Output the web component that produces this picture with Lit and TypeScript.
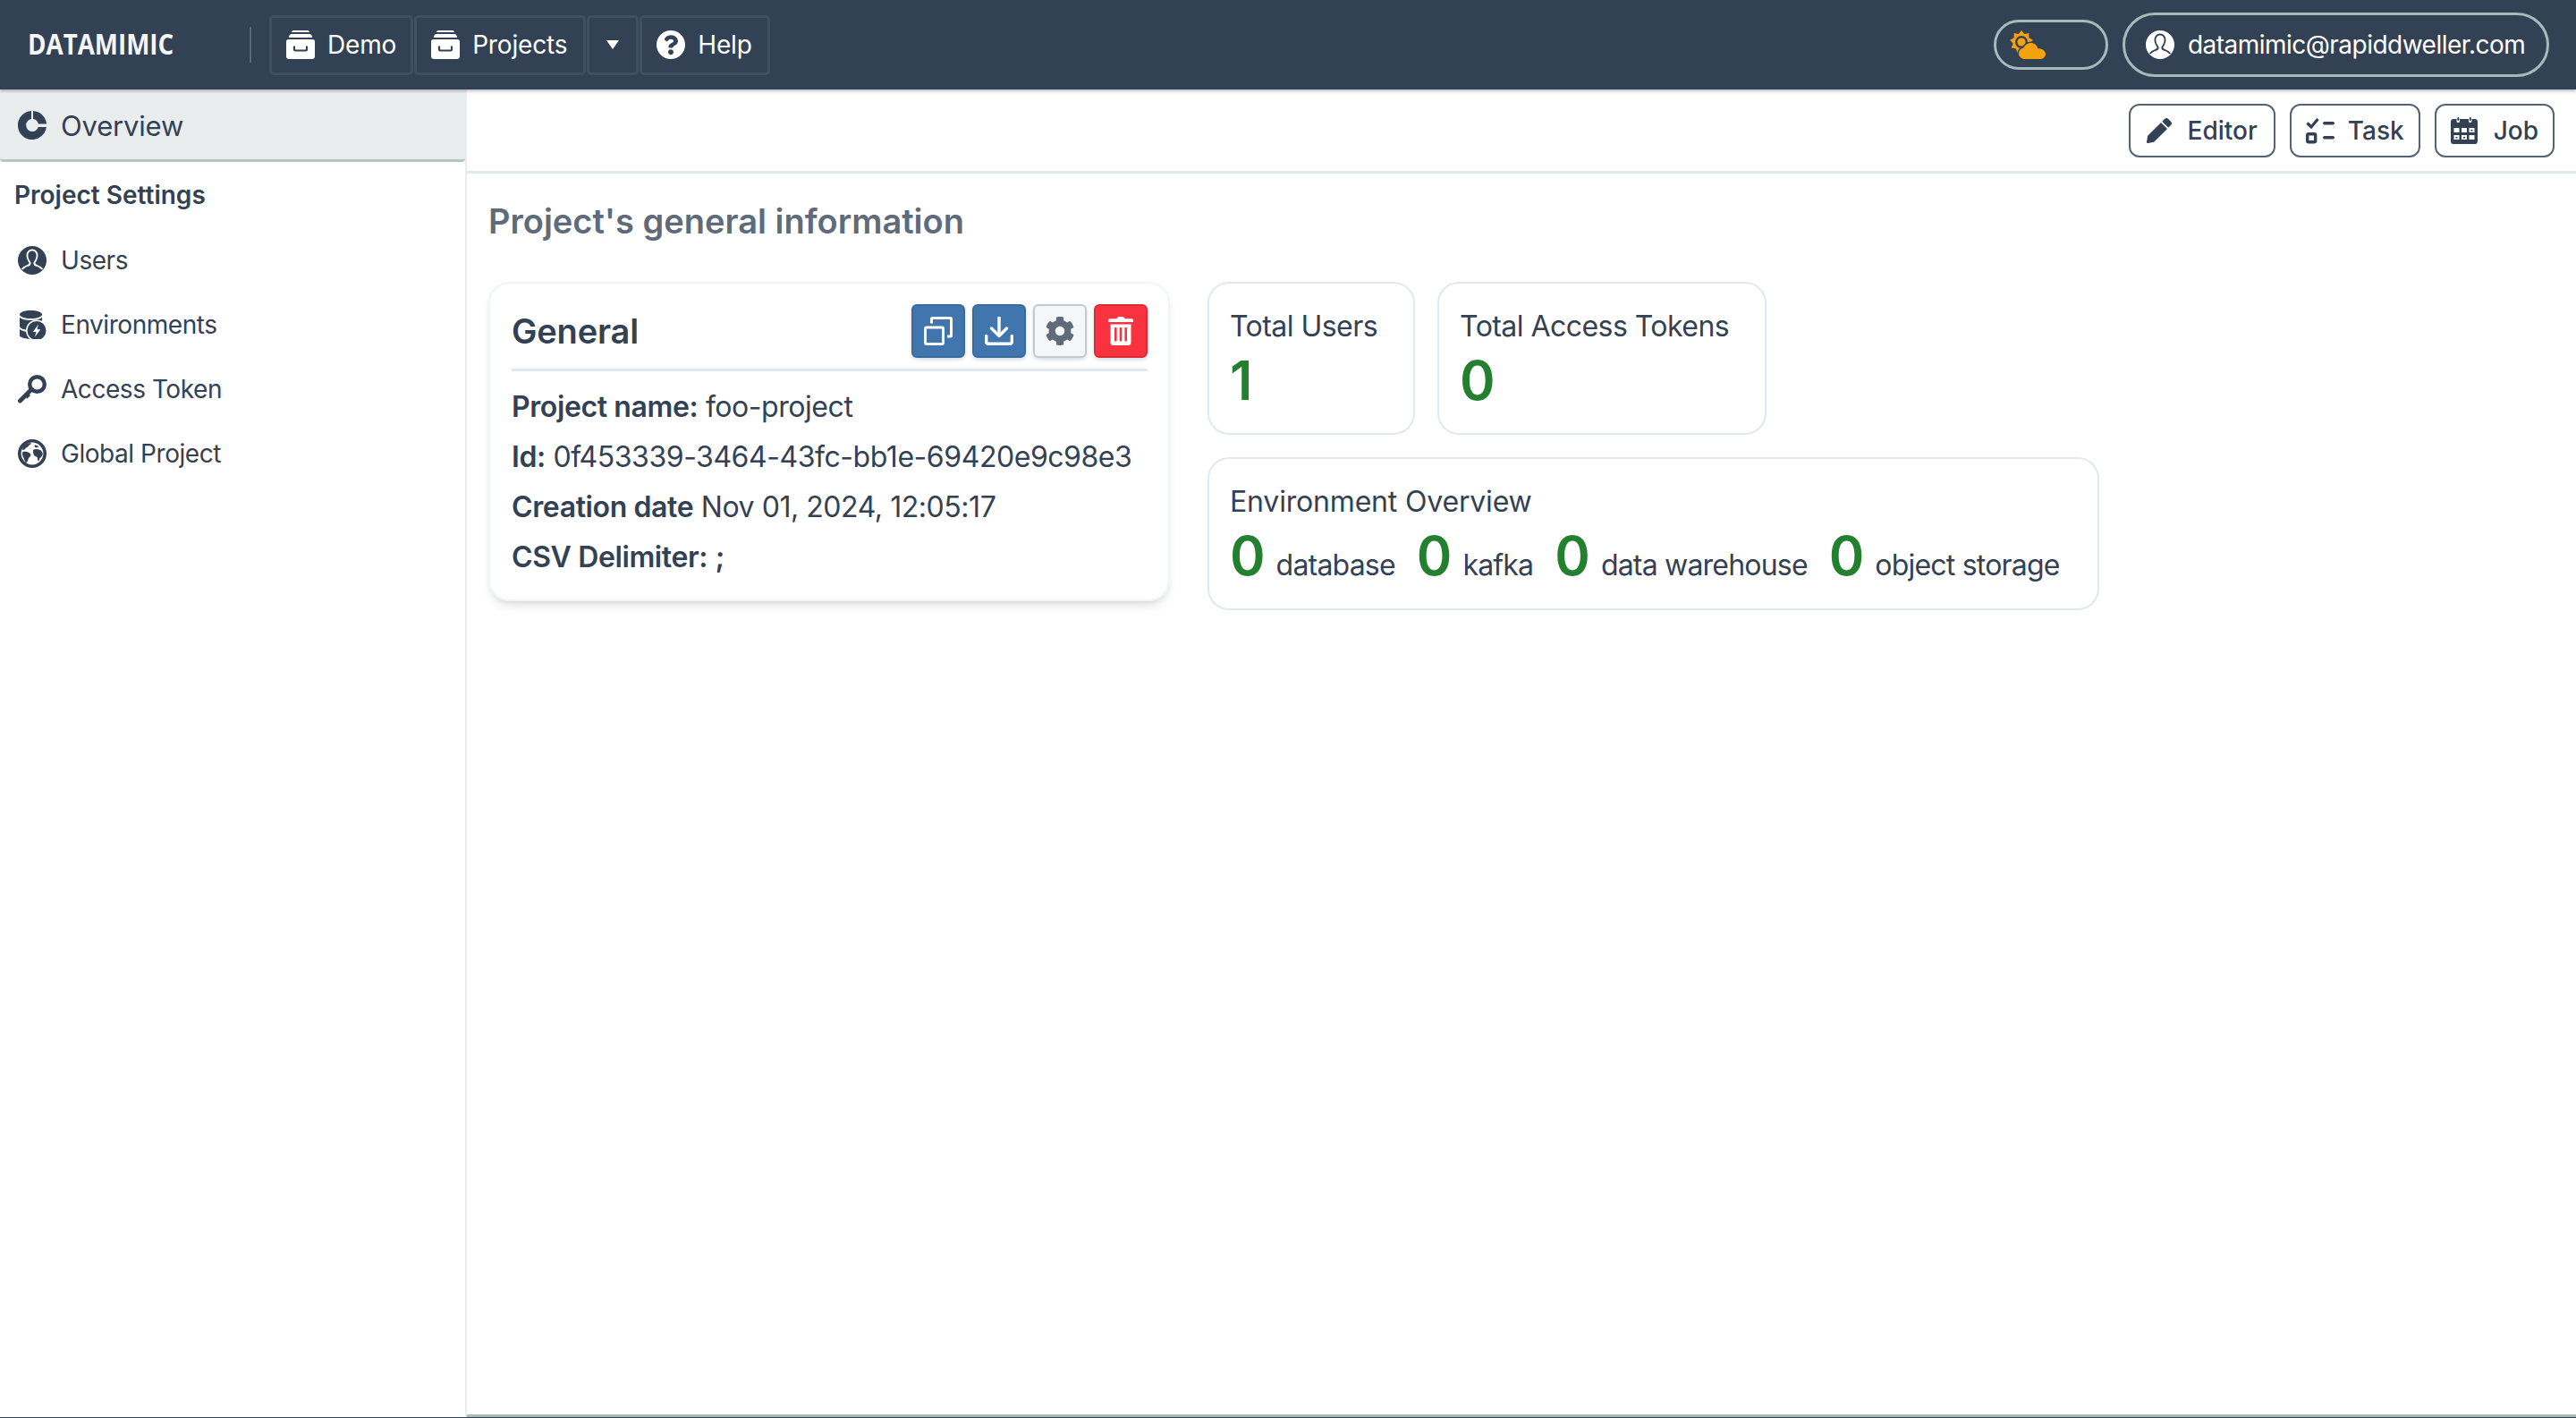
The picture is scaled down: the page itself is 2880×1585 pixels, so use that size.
import { LitElement, html, css, svg } from "lit";
import { customElement } from "lit/decorators.js";

const star = (() => {
  const pts: string[] = [];
  const n = 9;
  for (let i = 0; i < n * 2; i++) {
    const r = i % 2 ? 9.6 : 13;
    const a = (Math.PI * i) / n - Math.PI / 2;
    pts.push(`${(13 + r * Math.cos(a)).toFixed(2)},${(13 + r * Math.sin(a)).toFixed(2)}`);
  }
  return pts.join(" ");
})();

const personPath =
  "M4.6 26c1.6-2.2 4.1-3.3 6.4-4.1 1.9-.7 2.6-1.4 2.6-2.8 0-1-.9-1.9-1.7-3.4-.8-1.5-1.4-3-1.4-5 0-3.6 2.4-6.1 5.5-6.1s5.5 2.5 5.5 6.1c0 2-.6 3.5-1.4 5-.8 1.5-1.7 2.4-1.7 3.4 0 1.4.7 2.1 2.6 2.8 2.3.8 4.8 1.9 6.4 4.1";
const bustPath =
  "M16 5.600c-2.800 0-4.600 2.200-4.600 5.100 0 1.900.6 3.400 1.300 4.700.8 1.500 1.900 2.500 1.900 3.800 0 1.800-1 2.800-3.200 3.600-2 .8-4.100 1.600-5.400 3.200A14.600 14.600 0 0 0 16 30.200c4.100 0 7.700-1.600 10-4.200-1.300-1.600-3.400-2.400-5.400-3.200-2.200-.8-3.200-1.800-3.200-3.600 0-1.300 1.100-2.300 1.900-3.800.7-1.300 1.300-2.800 1.300-4.700 0-2.900-1.800-5.100-4.600-5.100z";

const icons = {
  archive: svg`<svg class="ic" viewBox="0 0 32 32"><path d="M6 2c0-1 1-2 2-2h16c1 0 2 1 2 2z" fill="currentColor"/><path d="M3 8c0-2 1-4 3-4h20c2 0 3 2 3 4z" fill="currentColor"/><path d="M0 12.500c0-1.400 1-2.500 2.500-2.500h27c1.500 0 2.500 1.100 2.500 2.500V29c0 1.700-1.300 3-3 3H3c-1.700 0-3-1.300-3-3z" fill="currentColor"/><path d="M9 17.500v3.700c0 .7.500 1.300 1.200 1.300h11.600c.7 0 1.200-.6 1.200-1.300v-3.700" fill="none" stroke="#334155" stroke-width="2.200"/></svg>`,
  help: svg`<svg class="ic" viewBox="8 8 496 496"><path fill="currentColor" d="M504 256c0 136.997-111.043 248-248 248S8 392.997 8 256C8 119.083 119.043 8 256 8s248 111.083 248 248zM262.655 90c-54.497 0-89.255 22.957-116.549 63.758-3.536 5.286-2.353 12.415 2.715 16.258l34.699 26.31c5.205 3.947 12.621 3.008 16.665-2.122 17.864-22.658 30.113-35.797 57.303-35.797 20.429 0 45.698 13.148 45.698 32.958 0 14.976-12.363 22.667-32.534 33.976C247.128 238.528 216 254.941 216 296v4c0 6.627 5.373 12 12 12h56c6.627 0 12-5.373 12-12v-1.333c0-28.462 83.186-29.647 83.186-106.667 0-58.002-60.165-102-116.531-102zM256 338c-25.365 0-46 20.635-46 46 0 25.364 20.635 46 46 46s46-20.636 46-46c0-25.365-20.635-46-46-46z"/></svg>`,
  weather: svg`<svg class="ic weather" viewBox="0 0 40 32"><polygon points="${star}" fill="#f2a20c"/><circle cx="13" cy="13" r="7" fill="#334155"/><circle cx="13" cy="13" r="4.600" fill="#f2a20c"/><path d="M17 32c-4 0-7-2.800-7-6.300 0-3.200 2.300-5.800 5.500-6.200C17 16.300 20 14 23.500 14c3.900 0 7.100 2.700 7.800 6.300 4.300-.3 8.700 2.400 8.700 6.300 0 3-2.500 5.400-5.500 5.400z" fill="#334155" stroke="#334155" stroke-width="3"/><path d="M17 32c-4 0-7-2.800-7-6.300 0-3.200 2.300-5.800 5.500-6.200C17 16.300 20 14 23.500 14c3.900 0 7.100 2.700 7.800 6.300 4.300-.3 8.700 2.400 8.700 6.300 0 3-2.500 5.400-5.500 5.400z" fill="#f2a20c"/></svg>`,
  userLight: svg`<svg class="ic" viewBox="0 0 32 32"><circle cx="16" cy="16" r="16" fill="#fff"/><path d="${personPath}" fill="#334155" stroke="#334155" stroke-width="2"/><path d="${bustPath}" fill="#fff"/></svg>`,
  user: svg`<svg class="ic" viewBox="0 0 32 32"><circle cx="16" cy="16" r="16" fill="#334155"/><path d="${personPath}" fill="#fff" stroke="#fff" stroke-width="2"/><path d="${bustPath}" fill="#334155"/></svg>`,
  overview: svg`<svg class="ic" viewBox="0 0 32 32"><path d="M15 .1v9A7 7 0 1 0 22.800 18h9A16 16 0 1 1 15 .1z" fill="#334155"/><path d="M17 .1A16 16 0 0 1 32 14.500h-9.200A7 7 0 0 0 17 9.100z" fill="#334155"/></svg>`,
  env: svg`<svg class="ic" viewBox="0 0 32 32"><path d="M2 4.500C2 2 7.500 0 14.500 0S27 2 27 4.500 21.500 9 14.500 9 2 7 2 4.500z" fill="#334155"/><path d="M2 8c2.500 2 7 3 12.500 3S24.500 10 27 8v3.500c-7 1-11 5-12 10.500C8 22 2 20.500 2 17.500z" fill="#334155"/><path d="M2 21c2.500 2 6.500 3 12 3.200.5 2.800 1.600 5.300 3.400 7.300-1 .2-2 .3-2.900.3C7.500 31.800 2 30 2 28z" fill="#334155"/><circle cx="21" cy="22.500" r="12" fill="#fff"/><circle cx="21" cy="22.500" r="10.500" fill="#334155"/><path d="M23 15.500l-6.200 8.500h3.700l-1.500 5.500 6.300-8.300h-3.800z" fill="#fff"/></svg>`,
  key: svg`<svg class="ic" viewBox="0 0 32 32"><circle cx="21.500" cy="10.500" r="8.300" fill="none" stroke="#334155" stroke-width="4.400"/><path d="M15.500 16 2.500 29" stroke="#334155" stroke-width="4.800" stroke-linecap="round" fill="none"/><path d="M7.500 23.500l3 3 3.500-3.500-3-3z" fill="#334155"/></svg>`,
  globe: svg`<svg class="ic" viewBox="0 0 32 32"><circle cx="16" cy="16" r="14.200" fill="#fff" stroke="#334155" stroke-width="3.600"/><path d="M8 6c2-1.500 5-2 7-1.500-.5 1.500-3 2-3.500 3.500-1 1.500-3 1-3.500 3-1 1-2 1-3 .5C5 9.500 6 7.500 8 6zM5.500 14c2.500-.5 5 0 7 1 1.500 1 2.500 2.500 1.500 4-1 1-2 1.500-2.500 3.500-.5 2-1.500 3.500-2.500 4-2-3-2-5-3.500-7.500C4.800 17 4.800 15.500 5.500 14zM19 6.500c1.500 0 3 .5 4.500 1.500-1 1-2.500 1.500-4 1-1-.5-1.500-1.500-.5-2.500zM17 12c2-1.500 5-1 8 0 1.500 1 2.500 2.500 2.800 4.500-.5 2-1.800 4-3.300 4.500-.5 1.500-.5 3-1.500 3.500-1-1-1-3-1.300-4.500-1.500-.5-3.500-1-4-3-.7-2-.7-3.500-.7-5z" fill="#334155"/></svg>`,
  pencil: svg`<svg class="ic pencil" viewBox="0 0 512 512"><path fill="currentColor" d="M497.900 142.100l-46.100 46.100c-4.700 4.700-12.300 4.700-17 0l-111-111c-4.700-4.700-4.700-12.300 0-17l46.100-46.100c18.700-18.700 49.100-18.700 67.900 0l60.100 60.100c18.800 18.700 18.800 49.100 0 67.900zM284.200 99.800L21.600 362.400.4 483.900c-2.900 16.400 11.400 30.600 27.800 27.800l121.500-21.300 262.600-262.600c4.700-4.700 4.700-12.300 0-17l-111-111c-4.800-4.700-12.400-4.700-17.100 0z"/></svg>`,
  task: svg`<svg class="ic" viewBox="0 0 32 32"><path d="M1.500 7.500l4.500 4.500 7.500-9" fill="none" stroke="currentColor" stroke-width="3.200"/><rect x="1.700" y="19.700" width="9" height="9" rx="1.500" fill="none" stroke="currentColor" stroke-width="3.400"/><rect x="19" y="6" width="13" height="3.600" rx="1.800" fill="currentColor"/><rect x="19" y="22" width="13" height="3.600" rx="1.800" fill="currentColor"/></svg>`,
  calendar: svg`<svg class="ic cal" viewBox="0 0 30 30"><path d="M3 2h3.500v2.500a1.700 1.700 0 0 0 3.500 0V2h10v2.500a1.700 1.700 0 0 0 3.500 0V2H27c1.700 0 3 1.300 3 3v22c0 1.700-1.300 3-3 3H3c-1.700 0-3-1.300-3-3V5c0-1.700 1.300-3 3-3z" fill="currentColor"/><rect x="7.300" y="0" width="2" height="4" rx="1" fill="currentColor"/><rect x="20.800" y="0" width="2" height="4" rx="1" fill="currentColor"/><g fill="#fff"><rect x="3.500" y="12" width="6" height="5"/><rect x="12" y="12" width="6" height="5"/><rect x="20.500" y="12" width="6" height="5"/><rect x="3.500" y="20" width="6" height="5"/><rect x="12" y="20" width="6" height="5"/><rect x="20.500" y="20" width="6" height="5"/></g><g fill="currentColor"><rect x="22.500" y="14" width="2" height="1.500"/><rect x="5.500" y="22" width="2" height="1.500"/><rect x="14" y="22" width="2" height="1.500"/></g></svg>`,
  clone: svg`<svg class="ic" viewBox="0 0 32 32"><rect x="1.500" y="12" width="20" height="18.500" rx="1.500" fill="none" stroke="#fff" stroke-width="3"/><path d="M8.500 7.500V2.500a1 1 0 0 1 1-1h20a1 1 0 0 1 1 1V21a1 1 0 0 1-1 1H26" fill="none" stroke="#fff" stroke-width="3"/></svg>`,
  download: svg`<svg class="ic" viewBox="0 0 32 32"><path d="M16 .5V20" stroke="#fff" stroke-width="3.400" stroke-linecap="round" fill="none"/><path d="M7.500 13 16 21.500 24.500 13" stroke="#fff" stroke-width="3.400" stroke-linecap="round" stroke-linejoin="round" fill="none"/><path d="M1.700 21.500v7a1.800 1.800 0 0 0 1.800 1.800h25a1.800 1.800 0 0 0 1.800-1.800v-7" stroke="#fff" stroke-width="3.400" stroke-linecap="round" fill="none"/></svg>`,
  gear: svg`<svg class="ic gear" viewBox="14 8 484 496"><path fill="#5f6b7a" d="M487.400 315.700l-42.600-24.600c4.300-23.200 4.300-47 0-70.200l42.600-24.600c4.900-2.800 7.100-8.600 5.500-14-11.100-35.600-30-67.800-54.700-94.600-3.800-4.100-10-5.100-14.800-2.300L380.800 110c-17.900-15.400-38.500-27.300-60.800-35.100V25.800c0-5.600-3.900-10.500-9.400-11.700-36.700-8.200-74.300-7.800-109.200 0-5.500 1.200-9.400 6.100-9.400 11.700V75c-22.200 7.900-42.800 19.800-60.800 35.100L88.700 85.500c-4.900-2.800-11-1.900-14.800 2.300-24.700 26.700-43.600 58.900-54.700 94.600-1.700 5.400.6 11.200 5.500 14L67.300 221c-4.300 23.200-4.300 47 0 70.200l-42.600 24.600c-4.900 2.800-7.100 8.600-5.500 14 11.100 35.600 30 67.800 54.700 94.600 3.800 4.100 10 5.100 14.800 2.300l42.600-24.600c17.900 15.400 38.500 27.300 60.800 35.100v49.200c0 5.600 3.900 10.500 9.400 11.700 36.700 8.200 74.300 7.800 109.200 0 5.500-1.200 9.400-6.100 9.400-11.700v-49.200c22.200-7.900 42.800-19.800 60.800-35.100l42.600 24.600c4.900 2.800 11 1.900 14.800-2.300 24.700-26.700 43.600-58.900 54.700-94.600 1.500-5.500-.7-11.300-5.600-14.100zM256 336c-44.100 0-80-35.900-80-80s35.900-80 80-80 80 35.900 80 80-35.900 80-80 80z"/></svg>`,
  trash: svg`<svg class="ic trash" viewBox="0 0 28 32"><path d="M9.500 2.200C9.800 1 10.800 0 12 0h4c1.200 0 2.200 1 2.500 2.200H26c1.100 0 2 .8 2 1.800v2H0V4c0-1 .9-1.800 2-1.800z" fill="#fff"/><path d="M2.500 8.500h23V29c0 1.700-1.300 3-3 3h-17c-1.700 0-3-1.300-3-3z" fill="#fff"/><g fill="#f9323f"><rect x="7" y="12" width="2.600" height="15.500" rx="1"/><rect x="12.700" y="12" width="2.600" height="15.500" rx="1"/><rect x="18.400" y="12" width="2.600" height="15.500" rx="1"/></g></svg>`,
};

@customElement("app-root")
export class AppRoot extends LitElement {
  static styles = css`
    :host {
      display: flex;
      flex-direction: column;
      height: 100vh;
      box-sizing: border-box;
      border-bottom: 1px solid #334155;
      font-family: Inter, "Liberation Sans", sans-serif;
      letter-spacing: -0.011em;
      color: #334155;
      background: #fff;
    }
    * { box-sizing: border-box; }
    .ic { width: 32px; height: 32px; display: block; flex: none; }
    .weather { width: 40px; }
    .pencil { width: 28px; height: 28px; }
    .cal { width: 30px; height: 30px; }
    .gear { width: 32px; height: 32px; }
    .trash { width: 28px; height: 32px; }

    .top {
      flex: none;
      height: 100px;
      background: #334155;
      color: #fff;
      display: flex;
      align-items: center;
      padding: 0 30px 0 31px;
      position: relative;
      z-index: 2;
      box-shadow: 0 2px 3px rgba(51, 65, 85, 0.35);
    }
    .logo {
      font-family: "Open Sans", sans-serif;
      font-weight: 700;
      font-size: 33px;
      letter-spacing: 0;
      width: 248px;
      padding-bottom: 3px;
      white-space: nowrap;
      transform: scaleX(0.84);
      transform-origin: left center;
      color: #f4f6f8;
    }
    .sep { width: 2px; height: 40px; background: #5b6778; margin-right: 20px; }
    .nav { display: flex; gap: 1px; }
    .nb {
      height: 67px;
      border: 3px solid #424f63;
      border-radius: 5px;
      display: flex;
      align-items: center;
      gap: 14px;
      font-size: 28px;
      padding: 0 16px;
    }
    .nb.wide { padding: 0 18px 0 16px; }
    .nb.drop { width: 58px; padding: 0; justify-content: center; }
    .nb.last { padding: 0 17px 0 16px; }
    .caret {
      width: 0; height: 0;
      border-left: 7.5px solid transparent;
      border-right: 7.5px solid transparent;
      border-top: 10px solid #fff;
    }
    .spacer { flex: 1; }
    .pill { display: flex; align-items: center; border: 3px solid #a9b8b8; border-radius: 40px; }
    .theme { width: 128px; height: 56px; padding-left: 15px; margin-right: 16px; }
    .account { width: 477px; height: 72px; padding-left: 23px; gap: 15px; font-size: 28px; letter-spacing: -0.52px; white-space: nowrap; }

    .body { flex: 1; display: flex; min-height: 0; }
    .side { width: 522px; flex: none; border-right: 2px solid #e9edee; }
    .active {
      height: 81px;
      background: #e9edee;
      border-bottom: 3px solid #b6c4c4;
      border-radius: 0 0 4px 4px;
      display: flex;
      align-items: center;
      gap: 16px;
      padding: 2px 20px 0 20px;
      font-size: 31px;
    }
    .sect { font-size: 28px; font-weight: 600; letter-spacing: 0; padding: 18px 0 0 16px; line-height: 38px; height: 74px; }
    .item { height: 72px; display: flex; align-items: center; gap: 16px; padding-left: 20px; font-size: 28px; letter-spacing: -0.016em; }

    .main { flex: 1; display: flex; flex-direction: column; border-bottom: 3px solid #aab8b8; min-width: 0; }
    .tools {
      height: 94px;
      flex: none;
      border-bottom: 3px solid #e2e8f0;
      display: flex;
      justify-content: flex-end;
      align-items: center;
      gap: 16px;
      padding: 1px 24px 0 0;
    }
    .tb {
      height: 60px;
      border: 2.5px solid #566375;
      border-radius: 12px;
      display: flex;
      align-items: center;
      gap: 18px;
      padding: 0 18px;
      font-size: 28px;
      font-weight: 500;
      letter-spacing: 0;
    }
    .tb.tight { gap: 15px; padding: 0 16px; }
    .tb.slim { padding: 0 16px; }
    h1 {
      margin: 0;
      font-size: 38px;
      font-weight: 600;
      letter-spacing: 0;
      line-height: 56px;
      color: #5f6b7b;
      padding: 25px 0 0 24px;
    }
    .content { display: flex; align-items: flex-start; gap: 42px; padding: 40px 0 0 24px; }
    .card {
      width: 762px;
      height: 357px;
      border: 2px solid #f1f5f9;
      border-radius: 24px;
      padding: 23px 23px 0 24px;
      box-shadow: 0 8px 12px -4px rgba(51, 65, 85, 0.16), 0 2px 4px rgba(51, 65, 85, 0.06);
    }
    .head {
      display: flex;
      align-items: center;
      justify-content: space-between;
      height: 75px;
      padding-bottom: 12px;
      border-bottom: 3px solid #e2e8f0;
      margin-bottom: 12px;
    }
    h2 { margin: 0; font-size: 38px; font-weight: 600; }
    .acts { display: flex; gap: 8px; }
    .a {
      width: 60px; height: 60px;
      border-radius: 6px;
      display: flex;
      align-items: center;
      justify-content: center;
      border: 2px solid #3b6a9c;
      background: #4175ad;
      box-shadow: 0 2px 4px rgba(51, 65, 85, 0.2);
    }
    .a.g { background: #f5f6f8; border-color: #c6c9cc; }
    .a.r { background: #f9323f; border-color: #d92c38; }
    .ln { font-size: 32px; line-height: 56px; white-space: nowrap; letter-spacing: -0.014em; }
    b { font-weight: 600; letter-spacing: -0.012em; }
    .right { display: flex; flex-direction: column; gap: 25px; }
    .row { display: flex; gap: 25px; }
    .st {
      border: 2.5px solid #e2e8f0;
      border-radius: 24px;
      height: 171px;
      padding: 20px 42px 0 23px;
      white-space: nowrap;
    }
    .row .st { padding-right: 40px; }
    .lab { font-size: 32px; line-height: 55px; }
    .lab.tot { letter-spacing: -0.017em; }
    .num { font-size: 60px; line-height: 66px; font-weight: 600; color: #22802f; letter-spacing: 0; }
    .envrow { display: flex; gap: 24px; }
    .env { display: flex; align-items: baseline; gap: 12px; font-size: 32px; line-height: 66px; letter-spacing: -0.8px; }
  `;

  render() {
    return html`
      <header class="top">
        <div class="logo">DATAMIMIC</div>
        <div class="sep"></div>
        <nav class="nav">
          <div class="nb">${icons.archive}<span>Demo</span></div>
          <div class="nb wide">${icons.archive}<span>Projects</span></div>
          <div class="nb drop"><span class="caret"></span></div>
          <div class="nb last">${icons.help}<span>Help</span></div>
        </nav>
        <div class="spacer"></div>
        <div class="pill theme">${icons.weather}</div>
        <div class="pill account">${icons.userLight}<span>datamimic@rapiddweller.com</span></div>
      </header>
      <div class="body">
        <aside class="side">
          <div class="active">${icons.overview}<span>Overview</span></div>
          <div class="sect">Project Settings</div>
          <div class="item">${icons.user}<span>Users</span></div>
          <div class="item">${icons.env}<span>Environments</span></div>
          <div class="item">${icons.key}<span>Access Token</span></div>
          <div class="item">${icons.globe}<span>Global Project</span></div>
        </aside>
        <main class="main">
          <div class="tools">
            <div class="tb">${icons.pencil}<span>Editor</span></div>
            <div class="tb tight">${icons.task}<span>Task</span></div>
            <div class="tb slim">${icons.calendar}<span>Job</span></div>
          </div>
          <h1>Project's general information</h1>
          <div class="content">
            <section class="card">
              <div class="head">
                <h2>General</h2>
                <div class="acts">
                  <div class="a">${icons.clone}</div>
                  <div class="a">${icons.download}</div>
                  <div class="a g">${icons.gear}</div>
                  <div class="a r">${icons.trash}</div>
                </div>
              </div>
              <div class="ln"><b>Project name:</b> foo-project</div>
              <div class="ln"><b>Id:</b> 0f453339-3464-43fc-bb1e-69420e9c98e3</div>
              <div class="ln"><b>Creation date</b> Nov 01, 2024, 12:05:17</div>
              <div class="ln"><b>CSV Delimiter:</b> <b>;</b></div>
            </section>
            <div class="right">
              <div class="row">
                <div class="st"><div class="lab tot">Total Users</div><div class="num">1</div></div>
                <div class="st"><div class="lab tot">Total Access Tokens</div><div class="num">0</div></div>
              </div>
              <div class="st">
                <div class="lab">Environment Overview</div>
                <div class="envrow">
                  ${["database", "kafka", "data warehouse", "object storage"].map(
                    (n) => html`<div class="env"><span class="num">0</span><span>${n}</span></div>`
                  )}
                </div>
              </div>
            </div>
          </div>
        </main>
      </div>
    `;
  }
}
